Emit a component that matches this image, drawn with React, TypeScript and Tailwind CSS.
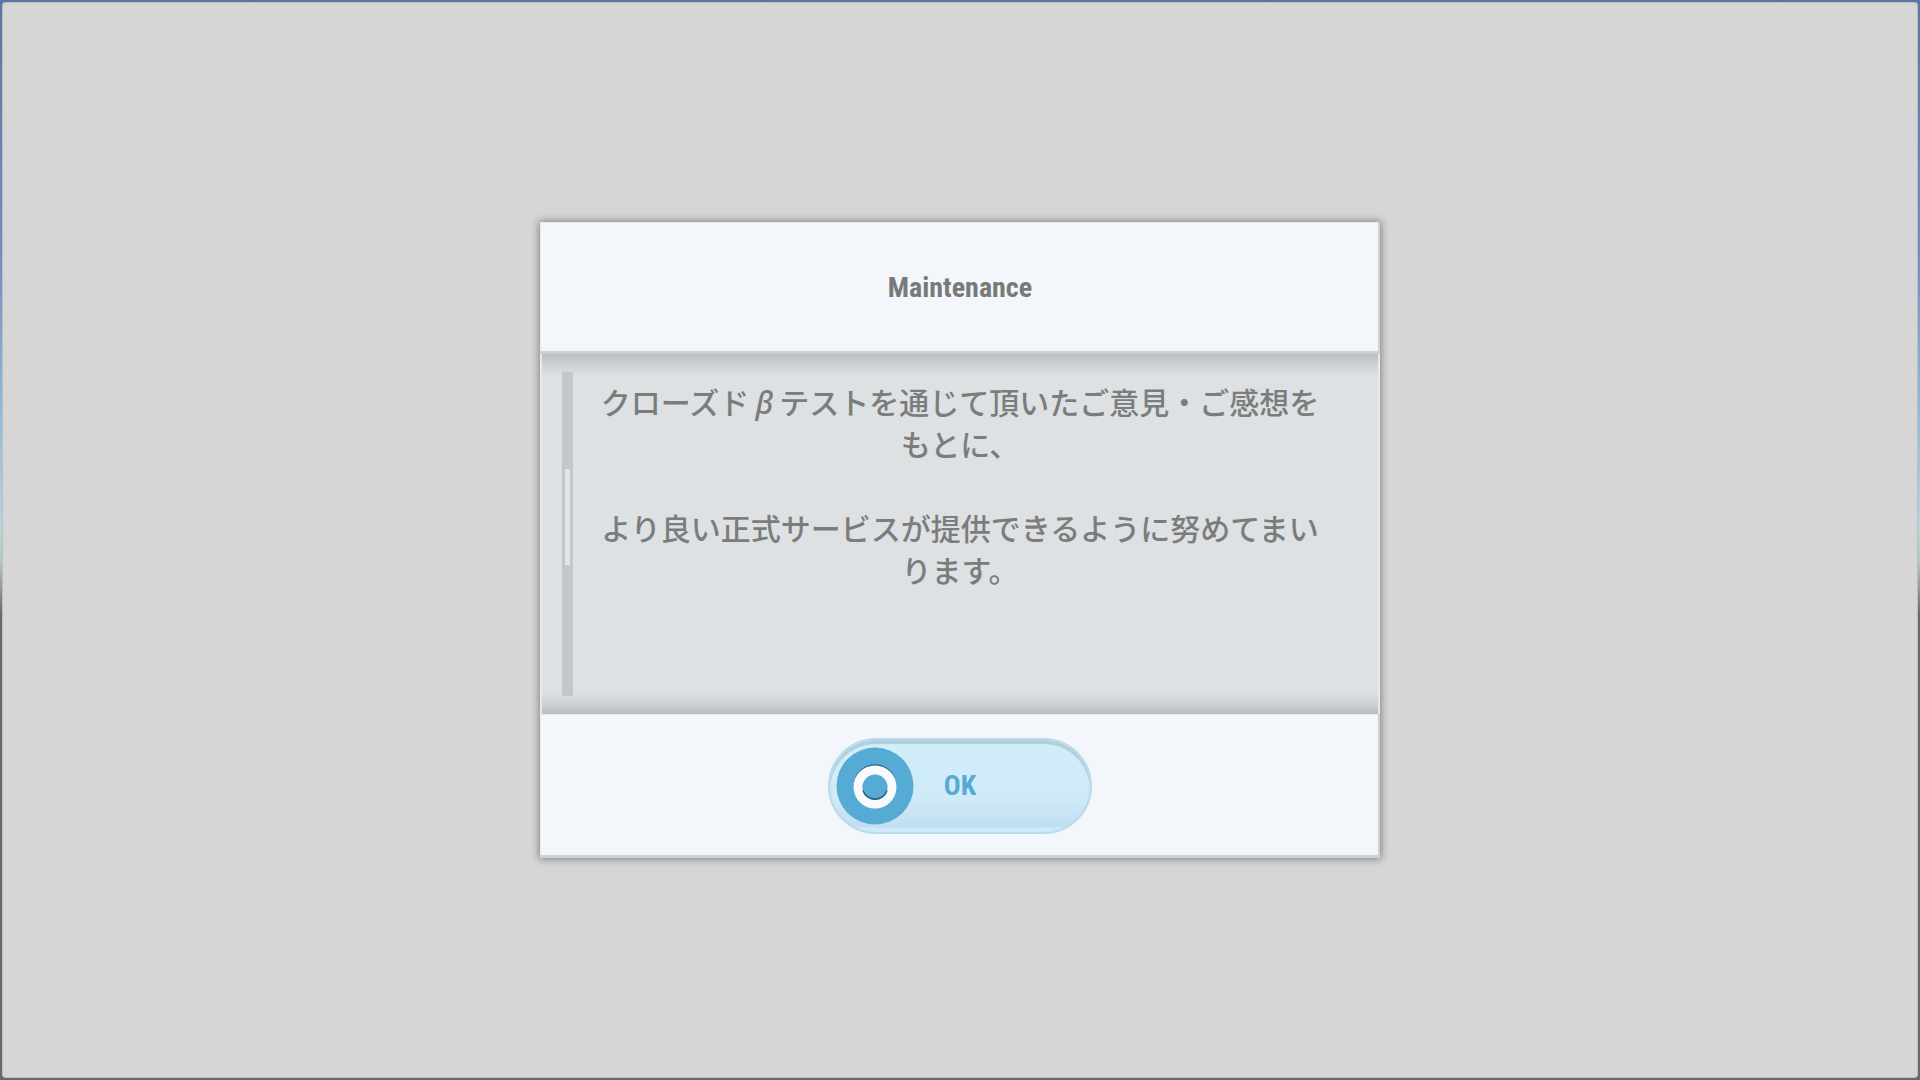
import { useState } from 'react'
import type { ReactNode } from 'react'

const messages: { id: number; content: ReactNode }[] = [
  {
    id: 1,
    content: (
      <>
        クローズド
        <i className="inline-block w-[30px] font-['Noto_Sans',sans-serif] leading-none italic">β</i>
        テストを通じて頂いたご意見・ご感想をもとに、
      </>
    ),
  },
  { id: 2, content: 'より良い正式サービスが提供できるように努めてまいります。' },
]

function RingIcon() {
  return (
    <svg viewBox="0 0 78 78" className="h-[78px] w-[78px]" aria-hidden="true">
      <circle cx="39" cy="39" r="38.5" fill="#56abd4" />
      <circle cx="39" cy="38.5" r="17" fill="none" stroke="#2b6684" strokeWidth="8.5" />
      <circle cx="39" cy="40" r="17" fill="none" stroke="#f8fafc" strokeWidth="9" />
      <path d="M27 43.5a12.6 12.6 0 0 0 24 0" fill="none" stroke="#2b6684" strokeWidth="1.5" />
    </svg>
  )
}

function ScrollBar() {
  return (
    <div className="flex w-[11px] shrink-0 flex-col items-center self-stretch bg-[#c5c6c8] pt-[97px]">
      <div className="h-24 w-[5px] bg-[#e2e4e6]"></div>
    </div>
  )
}

export default function App() {
  const [open, setOpen] = useState(true)

  return (
    <div className="min-h-screen bg-[linear-gradient(180deg,#5b75a3_0%,#6f8fc0_24%,#8fb8dc_38%,#b5d6dc_49%,#b3c6c3_52%,#6b6763_57%,#6b6763_100%)] p-[2px]">
      <div className="flex min-h-[calc(100vh-4px)] items-center justify-center rounded-[4px] bg-[#d6d6d6] shadow-[inset_0_0_2px_#8a8a8a]">
        {open && (
          <div
            role="dialog"
            aria-labelledby="dialog-title"
            className="w-full max-w-[840px] bg-[#f3f6fb] shadow-[0_0_8px_1px_rgba(0,0,0,0.4)]"
          >
            {/* Header */}
            <div className="flex h-[132px] items-center justify-center shadow-[inset_-2px_-3px_1px_#ccd1d8,inset_1px_1px_0_#e6e9ed]">
              <h1
                id="dialog-title"
                className="font-['Roboto_Condensed','Liberation_Sans',sans-serif] text-[28px] leading-8 font-bold text-[#777a78]"
              >
                Maintenance
              </h1>
            </div>

            {/* Message */}
            <div className="flex h-[360px] border-x-2 border-[#e6eaea] bg-[linear-gradient(180deg,#bcbdc0_0,#cdd1d3_10px,#dde1e4_22px,#dde1e4_338px,#cdd1d3_350px,#bbbcbf_360px)] pt-[18px] pr-[58px] pb-[18px] pl-5">
              <ScrollBar />
              <div className="flex-1 space-y-[42px] pt-2 pl-[27px] text-center font-['Noto_Sans_CJK_JP',sans-serif] text-[30px] leading-[42px] font-medium text-[#7b7d7c]">
                {messages.map((message) => (
                  <p key={message.id}>{message.content}</p>
                ))}
              </div>
            </div>

            {/* Footer */}
            <div className="flex h-36 items-center justify-center shadow-[inset_-2px_-3px_1px_#ccd1d8,inset_1px_1px_0_#e6e9ed]">
              <button
                type="button"
                onClick={() => setOpen(false)}
                className="grid h-24 w-[264px] grid-cols-[78px_1fr_78px] items-center rounded-full border-2 border-[#b7dbe9] bg-[linear-gradient(180deg,#d2eef9_0%,#d0ebf8_60%,#c2def2_94%,#cdeaf8_96%)] px-[6px] shadow-[inset_0_4px_1px_#b0cedb]"
              >
                <RingIcon />
                <span className="font-['Roboto_Condensed','Liberation_Sans',sans-serif] text-[28px] leading-8 font-bold text-[#56abd4]">
                  OK
                </span>
              </button>
            </div>
          </div>
        )}
      </div>
    </div>
  )
}
